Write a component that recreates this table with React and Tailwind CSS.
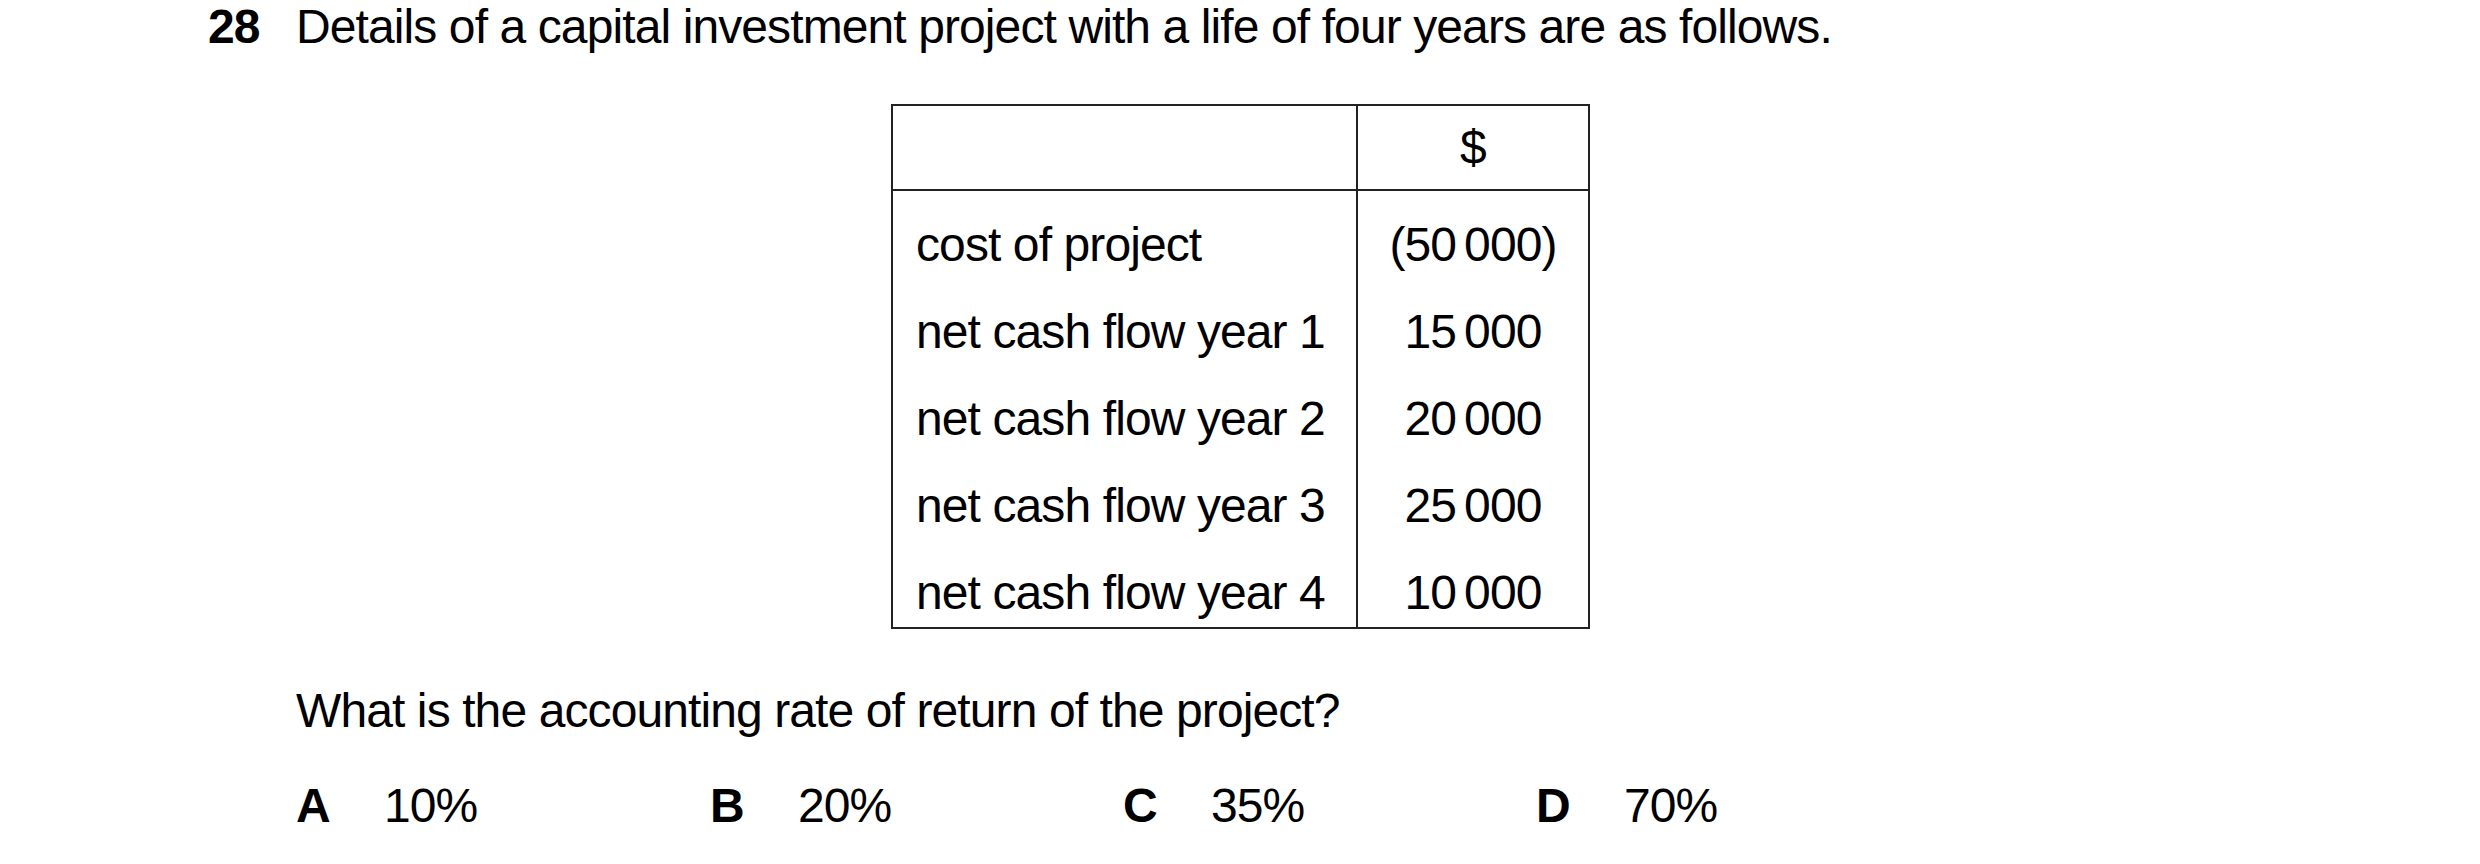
const rows = [
  { label: "cost of project", head: "(50", tail: "000)" },
  { label: "net cash flow year 1", head: "15", tail: "000" },
  { label: "net cash flow year 2", head: "20", tail: "000" },
  { label: "net cash flow year 3", head: "25", tail: "000" },
  { label: "net cash flow year 4", head: "10", tail: "000" },
];

const options = [
  { letter: "A", value: "10%" },
  { letter: "B", value: "20%" },
  { letter: "C", value: "35%" },
  { letter: "D", value: "70%" },
];

export default function App() {
  return (
    <div className="w-[2480px] h-[864px] bg-white text-black font-['Liberation_Sans',Arial,sans-serif] text-[48px] tracking-[-0.9px] leading-none overflow-hidden">
      <div className="flex pl-[208px]">
        <span className="w-[88px] shrink-0 font-bold leading-[54px]">28</span>
        <div className="flex flex-col">
          <p className="leading-[54px]">Details of a capital investment project with a life of four years are as follows.</p>

          {/* table */}
          <div className="ml-[595px] mt-[50px] w-[699px] border-2 border-[#222] grid grid-cols-[465px_1fr]">
            <div className="h-[85px] border-r-2 border-b-2 border-[#222]"></div>
            <div className="h-[85px] border-b-2 border-[#222] flex items-center justify-center">$</div>
            {rows.map((r, i) => {
              const h =
                i === 0
                  ? "h-[97px] pt-[10px] items-center"
                  : i === 4
                  ? "h-[78px] pt-[20px] items-start"
                  : "h-[87px] items-center";
              return (
                <div key={i} className="contents">
                  <div className={`${h} border-r-2 border-[#222] flex pl-[23px]`}>
                    {r.label}
                  </div>
                  <div className={`${h} flex justify-center`}>
                    {r.head}
                    <span className="ml-[8px]">{r.tail}</span>
                  </div>
                </div>
              );
            })}
          </div>

          <p className="mt-[58px]">What is the accounting rate of return of the project?</p>

          <div className="mt-[47px] grid grid-cols-[414px_413px_413px_413px]">
            {options.map((o) => (
              <div key={o.letter} className="flex">
                <span className="w-[88px] font-bold">{o.letter}</span>
                <span>{o.value}</span>
              </div>
            ))}
          </div>
        </div>
      </div>
    </div>
  );
}
